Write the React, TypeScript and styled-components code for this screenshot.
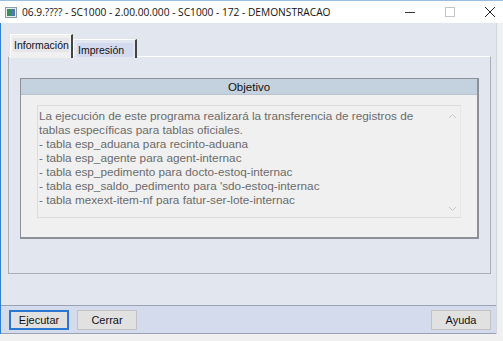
import React from "react";
import styled, { createGlobalStyle } from "styled-components";

const GlobalStyle = createGlobalStyle`
  html, body {
    margin: 0;
    padding: 0;
    background: #f0f0f0;
  }
  * {
    box-sizing: border-box;
  }
`;

const lines = [
  "La ejecución de este programa realizará la transferencia de registros de",
  "tablas específicas para tablas oficiales.",
  "- tabla esp_aduana para recinto-aduana",
  "- tabla esp_agente para agent-internac",
  "- tabla esp_pedimento para docto-estoq-internac",
  "- tabla esp_saldo_pedimento para 'sdo-estoq-internac",
  "- tabla mexext-item-nf para fatur-ser-lote-internac",
];

function App() {
  return (
    <>
      <GlobalStyle />
      <Frame>
        <TitleBar>
          <AppIcon>
            <svg width="12" height="11" viewBox="0 0 12 11">
              <rect x="0.5" y="0.5" width="11" height="10" fill="#e8eef2" stroke="#8a9aa6" />
              <rect x="2" y="2" width="4" height="7" fill="#3b8f5a" />
              <rect x="6" y="2" width="4" height="7" fill="#4a78b8" />
            </svg>
          </AppIcon>
          <Title>06.9.???? - SC1000 - 2.00.00.000 - SC1000 - 172 - DEMONSTRACAO</Title>
          <Controls>
            <CtrlButton>
              <svg width="10" height="10" viewBox="0 0 10 10">
                <line x1="0" y1="5.5" x2="10" y2="5.5" stroke="#333" strokeWidth="1" />
              </svg>
            </CtrlButton>
            <CtrlButton>
              <svg width="10" height="10" viewBox="0 0 10 10">
                <rect x="0.5" y="0.5" width="9" height="9" fill="none" stroke="#c4c4c4" strokeWidth="1" />
              </svg>
            </CtrlButton>
            <CtrlButton>
              <svg width="10" height="10" viewBox="0 0 10 10">
                <path d="M0 0 L10 10 M10 0 L0 10" stroke="#222" strokeWidth="1" />
              </svg>
            </CtrlButton>
          </Controls>
        </TitleBar>
        <Window>
          <Body>
            <TabRow>
              <Tab active>
                <TabLabel active>Información</TabLabel>
              </Tab>
              <Tab>
                <TabLabel>Impresión</TabLabel>
              </Tab>
            </TabRow>
            <Panel>
              <Group>
                <GroupHeader>Objetivo</GroupHeader>
                <GroupContent>
                  <TextArea>
                    <TextLines>
                      {lines.map((l) => (
                        <Line key={l}>{l}</Line>
                      ))}
                    </TextLines>
                    <ScrollBar>
                      <Arrow>
                        <svg width="9" height="6" viewBox="0 0 9 6">
                          <path d="M1 5 L4.5 1.5 L8 5" fill="none" stroke="#c8c8c8" strokeWidth="1" />
                        </svg>
                      </Arrow>
                      <Arrow>
                        <svg width="9" height="6" viewBox="0 0 9 6">
                          <path d="M1 1 L4.5 4.5 L8 1" fill="none" stroke="#c8c8c8" strokeWidth="1" />
                        </svg>
                      </Arrow>
                    </ScrollBar>
                  </TextArea>
                </GroupContent>
              </Group>
            </Panel>
          </Body>
          <Footer>
            <Button focused>Ejecutar</Button>
            <Button>Cerrar</Button>
            <Spacer />
            <Button>Ayuda</Button>
          </Footer>
        </Window>
      </Frame>
    </>
  );
}

export default App;

const Frame = styled.div`
  width: 503px;
  height: 341px;
  display: flex;
  flex-direction: column;
  background: #f0f0f0;
  overflow: hidden;
`;

const TitleBar = styled.div`
  height: 23px;
  display: flex;
  align-items: center;
  background: #ffffff;
  border-top: 1px solid #9cbbe0;
  flex-shrink: 0;
`;

const AppIcon = styled.div`
  width: 22px;
  padding-left: 5px;
  display: flex;
  align-items: center;
`;

const Title = styled.div`
  flex: 1;
  font-family: "Open Sans", "Noto Sans", sans-serif;
  font-size: 10.2px;
  color: #111;
  white-space: nowrap;
`;

const Controls = styled.div`
  display: flex;
  height: 100%;
  margin-right: -7px;
`;

const CtrlButton = styled.div`
  width: 40px;
  height: 100%;
  display: flex;
  align-items: center;
  justify-content: center;
`;

const Window = styled.div`
  width: 497px;
  height: 311px;
  display: flex;
  flex-direction: column;
  border-left: 1px solid #2f7fd6;
  border-right: 1px solid #d0d4dc;
  background: #e2e6ee;
`;

const Body = styled.div`
  flex: 1;
  display: flex;
  flex-direction: column;
  padding: 13px 5px 31px 7px;
`;

const TabRow = styled.div`
  display: flex;
  align-items: flex-end;
  height: 22px;
  padding-left: 2px;
  position: relative;
  z-index: 1;
  margin-bottom: -2px;
`;

const Tab = styled.div<{ active?: boolean }>`
  display: flex;
  align-items: center;
  height: ${(p) => (p.active ? "24px" : "19px")};
  width: ${(p) => (p.active ? "63px" : "64px")};
  padding: ${(p) => (p.active ? "0 2px 3px 2px" : "1px 2px 0 3px")};
  background: ${(p) => (p.active ? "#f0f0f0" : "#e2e6ee")};
  border: 1px solid #ffffff;
  border-bottom: none;
  border-right: 2px solid #444;
`;

const TabLabel = styled.span<{ active?: boolean }>`
  flex: 1;
  height: 14px;
  line-height: 14px;
  padding-left: 1px;
  font-family: "Liberation Sans", Arial, sans-serif;
  font-size: 10.5px;
  color: #111;
  background: ${(p) => (p.active ? "#e6e6ea" : "#d3d9ee")};
`;

const Panel = styled.div`
  flex: 1;
  display: flex;
  flex-direction: column;
  border: 1px solid #a9adb5;
  border-top-color: #ffffff;
  padding: 21px 11px 34px 11px;
`;

const Group = styled.div`
  flex: 1;
  display: flex;
  flex-direction: column;
  border: 1px solid #8d9096;
  border-right-width: 2px;
  border-bottom-width: 2px;
  background: #f0f0f0;
`;

const GroupHeader = styled.div`
  height: 16px;
  background: #c4d2df;
  border-bottom: 1px solid #b8c3ce;
  text-align: center;
  font-family: "Liberation Sans", Arial, sans-serif;
  font-size: 11.5px;
  line-height: 16px;
  color: #111;
`;

const GroupContent = styled.div`
  flex: 1;
  display: flex;
  padding: 10px 16px 19px 16px;
`;

const TextArea = styled.div`
  flex: 1;
  display: flex;
  border: 1px solid #dcdcdc;
  border-right-color: #e6e6e6;
  background: #f0f0f0;
`;

const TextLines = styled.div`
  flex: 1;
  padding: 3px 0 0 1px;
`;

const Line = styled.div`
  font-family: "Liberation Sans", Arial, sans-serif;
  font-size: 11.75px;
  line-height: 14px;
  color: #6b6b6b;
  white-space: nowrap;
`;

const ScrollBar = styled.div`
  width: 16px;
  display: flex;
  flex-direction: column;
  justify-content: space-between;
  align-items: center;
  padding: 7px 0 5px 0;
`;

const Arrow = styled.div`
  display: flex;
`;

const Footer = styled.div`
  height: 29px;
  display: flex;
  align-items: center;
  gap: 8px;
  padding: 0 5px 0 8px;
  background: #d3dbec;
  border-top: 1px solid #9aa3b5;
  border-bottom: 1px solid #9aa3b5;
  flex-shrink: 0;
`;

const Spacer = styled.div`
  flex: 1;
`;

const Button = styled.div<{ focused?: boolean }>`
  width: 60px;
  height: 20px;
  display: flex;
  align-items: center;
  justify-content: center;
  font-family: "Liberation Sans", Arial, sans-serif;
  font-size: 11px;
  color: #111;
  background: #e1e1e1;
  border: ${(p) => (p.focused ? "2px solid #2a78d2" : "1px solid #c2c2c2")};
`;
